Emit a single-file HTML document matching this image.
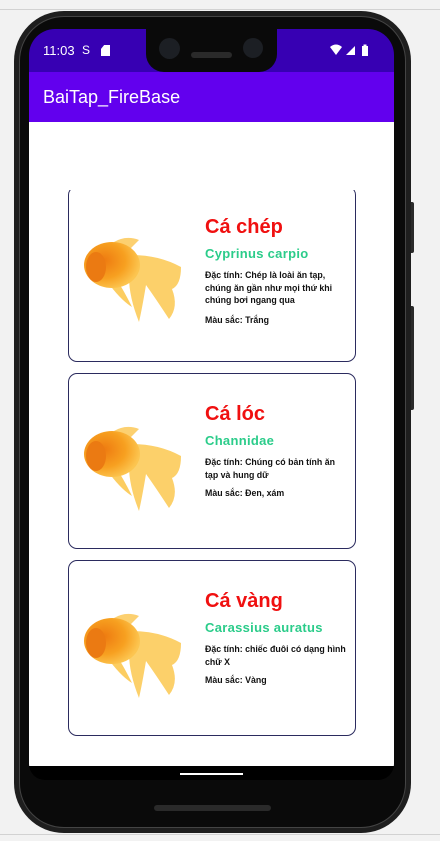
<!DOCTYPE html>
<html><head><meta charset="utf-8"><style>
*{margin:0;padding:0;box-sizing:border-box}
body{width:440px;height:841px;background:#f2f2f2;position:relative;overflow:hidden;font-family:"Liberation Sans",sans-serif}
.abs{position:absolute}
.card{position:absolute;left:68px;width:288px;height:176px;border:1px solid #2b2b5e;border-radius:9px;background:#fff}
.t{position:absolute;left:136px;font-weight:bold;color:#f01010;font-size:20px}
.s{position:absolute;left:136px;font-weight:bold;color:#2bcc8a;font-size:13px;letter-spacing:0.3px}
.d{position:absolute;left:136px;width:145px;font-weight:bold;color:#111;font-size:8.8px;line-height:12.5px}
.fish{position:absolute;left:15px;width:100px;height:90px}
</style></head><body>
<div class="abs" style="left:0;top:9px;width:440px;height:1px;background:#d2d2d2"></div>
<div class="abs" style="left:0;top:834px;width:440px;height:1px;background:#d2d2d2"></div>
<div class="abs" style="left:409px;top:202px;width:5px;height:51px;background:#2a2a2a;border-radius:2px"></div>
<div class="abs" style="left:409px;top:306px;width:5px;height:104px;background:#2a2a2a;border-radius:2px"></div>
<div class="abs" style="left:14px;top:11px;width:397px;height:822px;background:#1e1e1e;border-radius:50px"></div>
<div class="abs" style="left:19px;top:16px;width:387px;height:812px;background:#0a0a0a;border-radius:45px;border:1px solid #444"></div>
<div class="abs" style="left:29px;top:29px;width:365px;height:751px;background:#000;border-radius:26px 26px 16px 16px;overflow:hidden">
  <div class="abs" style="left:0;top:0;width:365px;height:43px;background:#3700b3"></div>
  <div class="abs" style="left:0;top:43px;width:365px;height:50px;background:#6200ee"></div>
  <div class="abs" style="left:0;top:93px;width:365px;height:644px;background:#fff"></div>
  <div class="abs" style="left:151px;top:744px;width:63px;height:2px;background:#fff"></div>
</div>
<div class="abs" style="left:146px;top:20px;width:131px;height:52px;background:#0a0a0a;border-radius:0 0 18px 18px"></div>
<div class="abs" style="left:159px;top:38px;width:21px;height:21px;background:#1c1f24;border-radius:50%"></div>
<div class="abs" style="left:243px;top:38px;width:20px;height:20px;background:#1c1f24;border-radius:50%"></div>
<div class="abs" style="left:191px;top:52px;width:41px;height:6px;background:#2a2a2a;border-radius:3px"></div>
<div class="abs" style="left:43px;top:43px;color:#fff;font-size:13px">11:03</div>
<div class="abs" style="left:82px;top:43px;color:#fff;font-size:12px">S</div>
<div class="abs" style="left:101px;top:45px;width:9px;height:11px;background:#fff;clip-path:polygon(35% 0,100% 0,100% 100%,0 100%,0 35%)"></div>
<svg class="abs" style="left:330px;top:44px" width="40" height="12"><path d="M0 3Q6 -2 12 3L6 11Z" fill="#fff"/><path d="M16 11L25 2V11Z" fill="#fff"/><rect x="32" y="2" width="6" height="10" fill="#fff"/><rect x="33.5" y="0.5" width="3" height="2" fill="#fff"/></svg>
<div class="abs" style="left:43px;top:87px;color:#fff;font-size:18px">BaiTap_FireBase</div>
<div class="abs" style="left:0;top:190px;width:440px;height:560px;overflow:hidden">
<svg width="0" height="0" style="position:absolute"><defs>
<radialGradient id="g" cx="35%" cy="40%" r="65%"><stop offset="0" stop-color="#ee7a10"/><stop offset="0.6" stop-color="#f7a020"/><stop offset="1" stop-color="#fcc550"/></radialGradient>
<g id="f"><path d="M30 5Q42 -2 55 3Q48 10 44 14Z" fill="#fcd070"/>
<path d="M48 18Q75 18 97 30Q97 48 88 52Q95 70 85 82Q72 62 62 48Q58 72 55 85Q45 60 45 40Z" fill="#fcc850" opacity="0.85"/>
<path d="M20 40Q35 62 48 70Q38 50 32 42Z" fill="#fcc850" opacity="0.9"/>
<ellipse cx="28" cy="28" rx="28" ry="23" fill="url(#g)"/>
<ellipse cx="12" cy="30" rx="10" ry="15" fill="#eb7a12"/></g></defs></svg>
<div class="card" style="top:-4px">
  <svg class="fish" style="top:50px" viewBox="0 0 100 90"><use href="#f"/></svg>
  <div class="t" style="top:29px">Cá chép</div>
  <div class="s" style="top:59px">Cyprinus carpio</div>
  <div class="d" style="top:82px">Đặc tính: Chép là loài ăn tạp, chúng ăn gần như mọi thứ khi chúng bơi ngang qua</div>
  <div class="d" style="top:127px">Màu sắc: Trắng</div>
</div>
<div class="card" style="top:183px">
  <svg class="fish" style="top:52px" viewBox="0 0 100 90"><use href="#f"/></svg>
  <div class="t" style="top:29px">Cá lóc</div>
  <div class="s" style="top:59px">Channidae</div>
  <div class="d" style="top:82px">Đặc tính: Chúng có bản tính ăn tạp và hung dữ</div>
  <div class="d" style="top:113px">Màu sắc: Đen, xám</div>
</div>
<div class="card" style="top:370px">
  <svg class="fish" style="top:52px" viewBox="0 0 100 90"><use href="#f"/></svg>
  <div class="t" style="top:29px">Cá vàng</div>
  <div class="s" style="top:59px">Carassius auratus</div>
  <div class="d" style="top:82px">Đặc tính: chiếc đuôi có dạng hình chữ X</div>
  <div class="d" style="top:113px">Màu sắc: Vàng</div>
</div>
</div>
<div class="abs" style="left:154px;top:805px;width:117px;height:6px;background:#2a2a2a;border-radius:3px"></div>
</body></html>
